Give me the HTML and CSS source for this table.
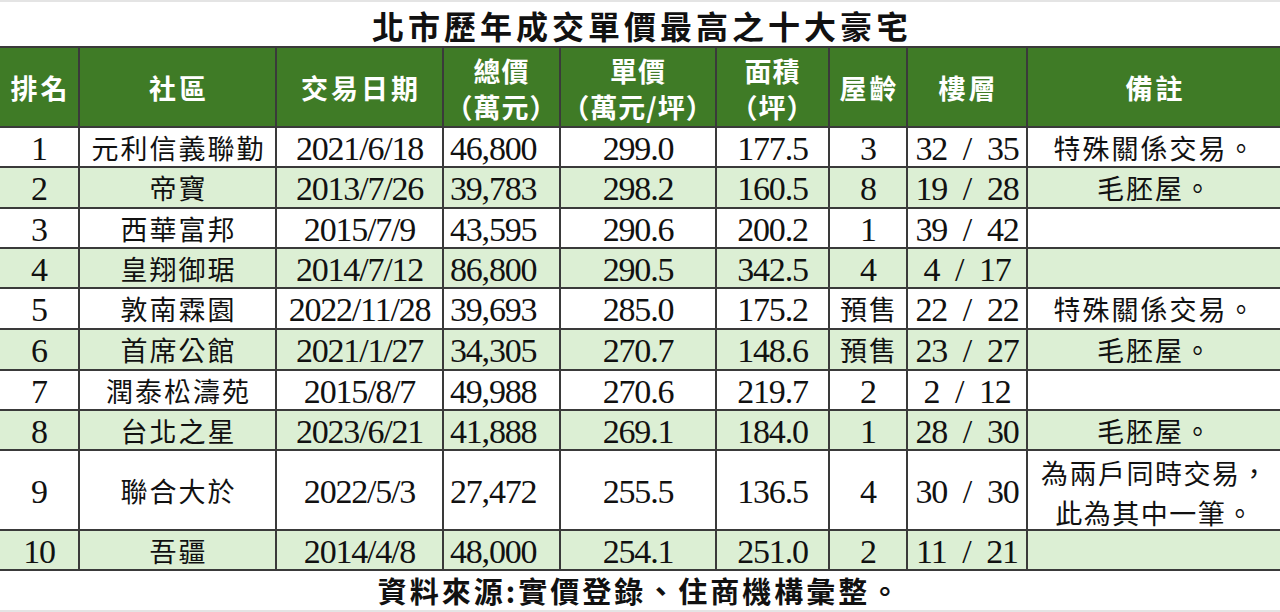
FILE: index.html
```html
<!DOCTYPE html>
<html lang="zh-Hant">
<head>
<meta charset="utf-8">
<title>北市歷年成交單價最高之十大豪宅</title>
<link rel="stylesheet" href="styles.css">
</head>
<body>
<div class="page">
  <div class="title">北市歷年成交單價最高之十大豪宅</div>
  <div class="grid">
    <div class="c h">排名</div>
    <div class="c h">社區</div>
    <div class="c h">交易日期</div>
    <div class="c h two">總價<br>（萬元）</div>
    <div class="c h two">單價<br>（萬元/坪）</div>
    <div class="c h two">面積<br>（坪）</div>
    <div class="c h">屋齡</div>
    <div class="c h">樓層</div>
    <div class="c h last">備註</div>

    <div class="c n">1</div><div class="c t">元利信義聯勤</div><div class="c n">2021/6/18</div><div class="c n l">46,800</div><div class="c n">299.0</div><div class="c n">177.5</div><div class="c n">3</div><div class="c n">32&ensp;/&ensp;35</div><div class="c t last">特殊關係交易。</div>

    <div class="c n g">2</div><div class="c t g">帝寶</div><div class="c n g">2013/7/26</div><div class="c n l g">39,783</div><div class="c n g">298.2</div><div class="c n g">160.5</div><div class="c n g">8</div><div class="c n g">19&ensp;/&ensp;28</div><div class="c t g last">毛胚屋。</div>

    <div class="c n">3</div><div class="c t">西華富邦</div><div class="c n">2015/7/9</div><div class="c n l">43,595</div><div class="c n">290.6</div><div class="c n">200.2</div><div class="c n">1</div><div class="c n">39&ensp;/&ensp;42</div><div class="c t last"></div>

    <div class="c n g">4</div><div class="c t g">皇翔御琚</div><div class="c n g">2014/7/12</div><div class="c n l g">86,800</div><div class="c n g">290.5</div><div class="c n g">342.5</div><div class="c n g">4</div><div class="c n g">4&ensp;/&ensp;17</div><div class="c t g last"></div>

    <div class="c n">5</div><div class="c t">敦南霖園</div><div class="c n">2022/11/28</div><div class="c n l">39,693</div><div class="c n">285.0</div><div class="c n">175.2</div><div class="c t">預售</div><div class="c n">22&ensp;/&ensp;22</div><div class="c t last">特殊關係交易。</div>

    <div class="c n g">6</div><div class="c t g">首席公館</div><div class="c n g">2021/1/27</div><div class="c n l g">34,305</div><div class="c n g">270.7</div><div class="c n g">148.6</div><div class="c t g">預售</div><div class="c n g">23&ensp;/&ensp;27</div><div class="c t g last">毛胚屋。</div>

    <div class="c n">7</div><div class="c t">潤泰松濤苑</div><div class="c n">2015/8/7</div><div class="c n l">49,988</div><div class="c n">270.6</div><div class="c n">219.7</div><div class="c n">2</div><div class="c n">2&ensp;/&ensp;12</div><div class="c t last"></div>

    <div class="c n g">8</div><div class="c t g">台北之星</div><div class="c n g">2023/6/21</div><div class="c n l g">41,888</div><div class="c n g">269.1</div><div class="c n g">184.0</div><div class="c n g">1</div><div class="c n g">28&ensp;/&ensp;30</div><div class="c t g last">毛胚屋。</div>

    <div class="c n">9</div><div class="c t">聯合大於</div><div class="c n">2022/5/3</div><div class="c n l">27,472</div><div class="c n">255.5</div><div class="c n">136.5</div><div class="c n">4</div><div class="c n">30&ensp;/&ensp;30</div><div class="c t last note2">為兩戶同時交易，<br>此為其中一筆。</div>

    <div class="c n g">10</div><div class="c t g">吾疆</div><div class="c n g">2014/4/8</div><div class="c n l g">48,000</div><div class="c n g">254.1</div><div class="c n g">251.0</div><div class="c n g">2</div><div class="c n g">11&ensp;/&ensp;21</div><div class="c t g last"></div>
  </div>
  <div class="foot">資料來源:實價登錄、住商機構彙整。</div>
</div>
</body>
</html>
```

FILE: styles.css
```css
html, body {
  margin: 0;
  padding: 0;
  background: #ffffff;
}

.page {
  width: 1280px;
  height: 612px;
  box-sizing: border-box;
  border-top: 2px solid #e4e4e4;
  border-bottom: 2px solid #e4e4e4;
  display: flex;
  flex-direction: column;
  font-family: "Liberation Serif", "Noto Sans CJK TC", serif;
  color: #111;
  overflow: hidden;
}

.title {
  height: 46px;
  box-sizing: border-box;
  border-bottom: 2px solid #3a3a3a;
  display: flex;
  align-items: center;
  justify-content: center;
  font-family: "Noto Sans CJK TC", sans-serif;
  font-size: 32px;
  font-weight: 700;
  letter-spacing: 4px;
  padding-left: 4px;
  padding-top: 2px;
  line-height: 1;
}

.grid {
  display: grid;
  grid-template-columns: 80px 197px 167px 117px 156px 113px 78px 120px 252px;
  grid-template-rows: 80px 40px 41px 40px 40px 41px 41px 40px 40px 80px 40px;
}

.c {
  box-sizing: border-box;
  border-right: 2px solid #3a3a3a;
  border-bottom: 2px solid #3a3a3a;
  display: flex;
  align-items: center;
  justify-content: center;
  text-align: center;
  white-space: nowrap;
  line-height: 1;
  overflow: hidden;
}

.c.last {
  border-right: none;
}

.h {
  background: #3f7b26;
  color: #ffffff;
  font-family: "Noto Sans CJK TC", sans-serif;
  font-size: 27px;
  font-weight: 700;
  letter-spacing: 3px;
  padding-left: 3px;
}

.h.two {
  line-height: 36px;
  letter-spacing: 1px;
  padding-left: 0;
  padding-top: 4px;
}

.g {
  background: #dcefd4;
}

.n {
  font-size: 34px;
  letter-spacing: -1.2px;
  padding-top: 3px;
}

.n.l {
  justify-content: flex-start;
  padding-left: 6px;
}

.t {
  font-family: "Noto Sans CJK TC", sans-serif;
  font-size: 27px;
  letter-spacing: 2px;
  padding-left: 2px;
}

.note2 {
  line-height: 40px;
  letter-spacing: 1.5px;
  padding-top: 6px;
}

.foot {
  flex: 1;
  display: flex;
  align-items: center;
  justify-content: center;
  font-family: "Noto Sans CJK TC", sans-serif;
  font-size: 29px;
  font-weight: 700;
  letter-spacing: 3px;
  line-height: 1;
}
```
